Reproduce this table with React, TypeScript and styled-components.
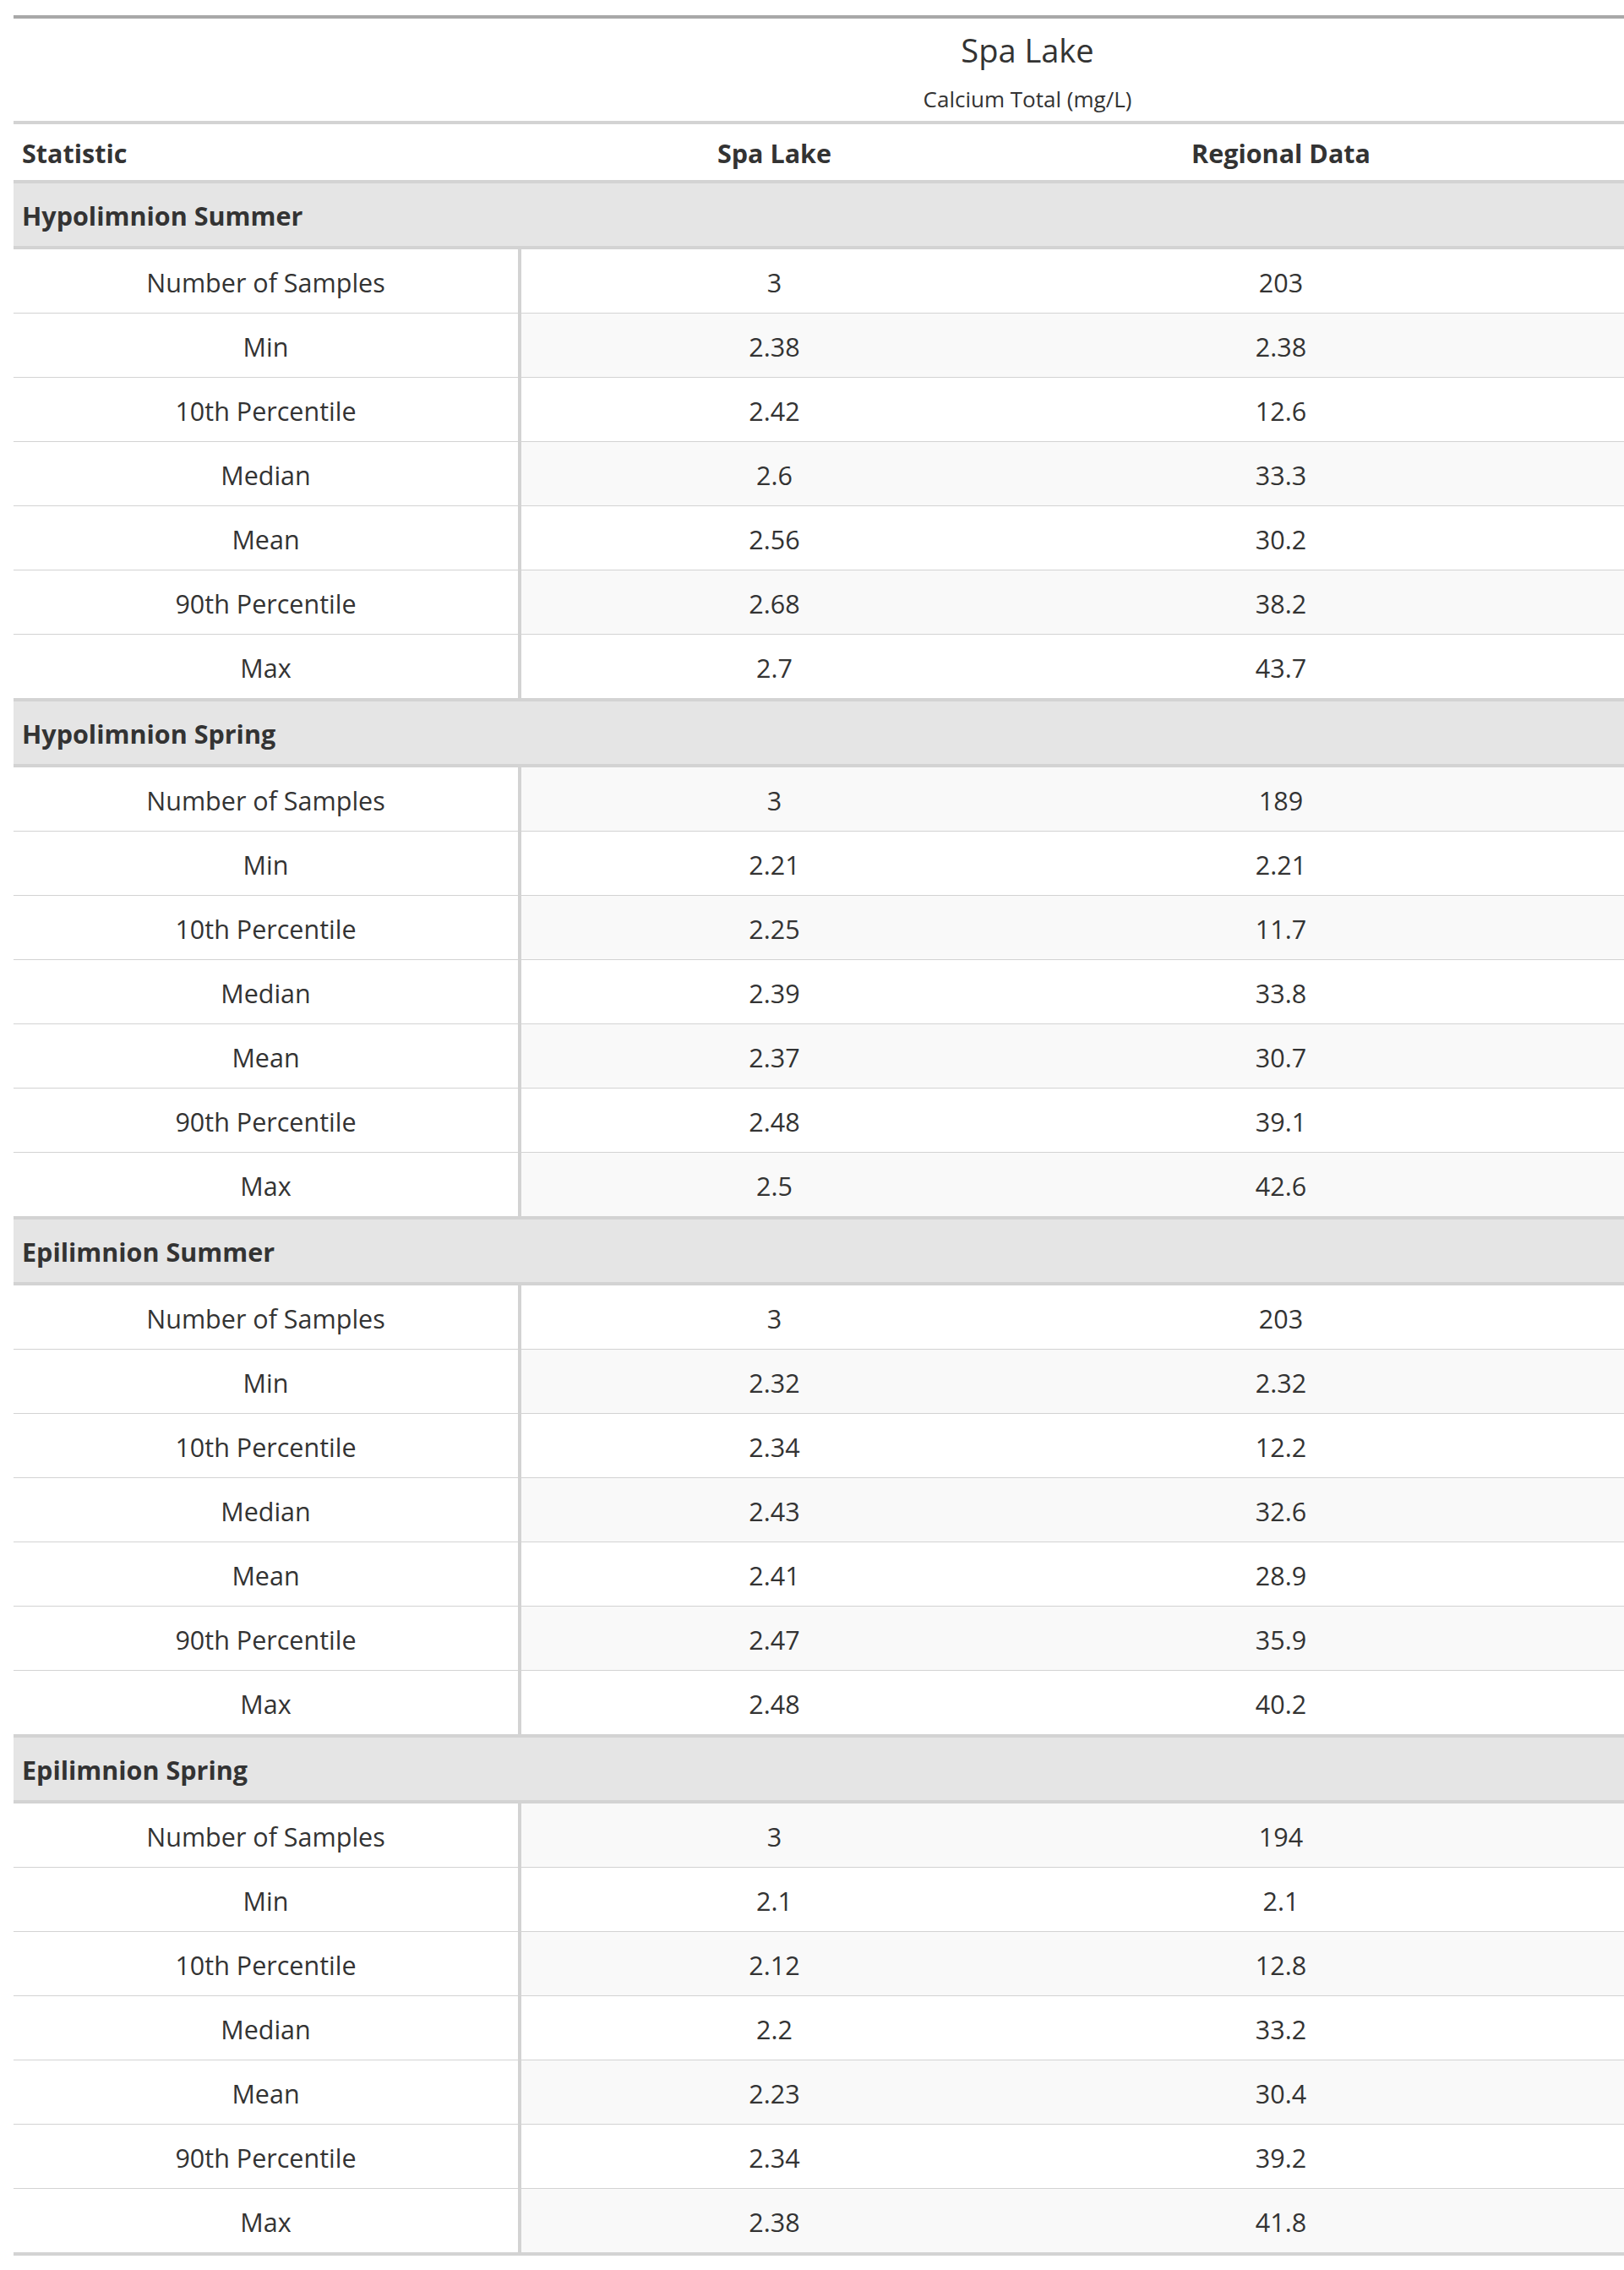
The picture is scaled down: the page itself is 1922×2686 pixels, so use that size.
import React from 'react'
import styled, { createGlobalStyle } from 'styled-components'

const GlobalStyle = createGlobalStyle`
    html, body {
        margin: 0;
        padding: 0;
        background: #ffffff;
    }
    body {
        font-family: "Open Sans", "Noto Sans", "Liberation Sans", sans-serif;
        color: #333333;
    }
`

const Page = styled.div`
    padding: 18px 0 0 16px;
`

const DataTable = styled.table`
    width: 1906px;
    table-layout: fixed;
    border-collapse: separate;
    border-spacing: 0;
    color: #333333;
    font-size: 30.5px;
`

const TitleCell = styled.th`
    border-top: 4px solid #a8a8a8;
    padding: 10px 10px 6px 504px;
    font-size: 38px;
    line-height: 54px;
    font-weight: 400;
    text-align: center;
`

const SubtitleCell = styled.th`
    padding: 7px 10px 8px 504px;
    font-size: 26px;
    line-height: 36px;
    font-weight: 400;
    text-align: center;
    border-bottom: 4px solid #d3d3d3;
`

const ColumnLabel = styled.th<{ $align?: string }>`
    padding: 12px 10px 10px;
    line-height: 44px;
    font-weight: 700;
    text-align: ${(p) => p.$align || 'center'};
    white-space: nowrap;
    overflow: hidden;
`

const GroupCell = styled.td`
    background: #e5e5e5;
    border-top: 4px solid #d3d3d3;
    border-bottom: 4px solid #d3d3d3;
    padding: 17px 10px 15px;
    line-height: 42px;
    font-weight: 700;
    text-align: left;
`

const StubCell = styled.td<{ $first: boolean }>`
    border-top: ${(p) => (p.$first ? 'none' : '1px solid #d3d3d3')};
    border-right: 4px solid #d3d3d3;
    padding: 18px 10px 14px;
    line-height: 43px;
    text-align: center;
    background: #ffffff;
`

const ValueCell = styled.td<{ $first: boolean; $striped: boolean }>`
    border-top: ${(p) => (p.$first ? 'none' : '1px solid #d3d3d3')};
    padding: 18px 10px 14px;
    line-height: 43px;
    text-align: center;
    background: ${(p) => (p.$striped ? '#f9f9f9' : '#ffffff')};
`

const BottomRule = styled.td`
    border-top: 4px solid #d3d3d3;
    padding: 0;
    height: 0;
`

const labels = [
    'Number of Samples',
    'Min',
    '10th Percentile',
    'Median',
    'Mean',
    '90th Percentile',
    'Max',
]

const groups = [
    {
        name: 'Hypolimnion Summer',
        lake: ['3', '2.38', '2.42', '2.6', '2.56', '2.68', '2.7'],
        regional: ['203', '2.38', '12.6', '33.3', '30.2', '38.2', '43.7'],
    },
    {
        name: 'Hypolimnion Spring',
        lake: ['3', '2.21', '2.25', '2.39', '2.37', '2.48', '2.5'],
        regional: ['189', '2.21', '11.7', '33.8', '30.7', '39.1', '42.6'],
    },
    {
        name: 'Epilimnion Summer',
        lake: ['3', '2.32', '2.34', '2.43', '2.41', '2.47', '2.48'],
        regional: ['203', '2.32', '12.2', '32.6', '28.9', '35.9', '40.2'],
    },
    {
        name: 'Epilimnion Spring',
        lake: ['3', '2.1', '2.12', '2.2', '2.23', '2.34', '2.38'],
        regional: ['194', '2.1', '12.8', '33.2', '30.4', '39.2', '41.8'],
    },
]

const App = () => {
    let rowIndex = 0

    return (
        <Page>
            <GlobalStyle />
            <DataTable>
                <colgroup>
                    <col style={{ width: 601 }} />
                    <col style={{ width: 599 }} />
                    <col style={{ width: 600 }} />
                    <col style={{ width: 106 }} />
                </colgroup>
                <thead>
                    <tr>
                        <TitleCell colSpan={4}>Spa Lake</TitleCell>
                    </tr>
                    <tr>
                        <SubtitleCell colSpan={4}>Calcium Total (mg/L)</SubtitleCell>
                    </tr>
                    <tr>
                        <ColumnLabel $align="left">Statistic</ColumnLabel>
                        <ColumnLabel>Spa Lake</ColumnLabel>
                        <ColumnLabel>Regional Data</ColumnLabel>
                        <ColumnLabel />
                    </tr>
                </thead>
                <tbody>
                    {groups.map((group) => (
                        <React.Fragment key={group.name}>
                            <tr>
                                <GroupCell colSpan={4}>{group.name}</GroupCell>
                            </tr>
                            {labels.map((label, i) => {
                                rowIndex += 1
                                const striped = rowIndex % 2 === 0
                                const first = i === 0
                                return (
                                    <tr key={label}>
                                        <StubCell $first={first}>{label}</StubCell>
                                        <ValueCell $first={first} $striped={striped}>{group.lake[i]}</ValueCell>
                                        <ValueCell $first={first} $striped={striped}>{group.regional[i]}</ValueCell>
                                        <ValueCell $first={first} $striped={striped} />
                                    </tr>
                                )
                            })}
                        </React.Fragment>
                    ))}
                    <tr>
                        <BottomRule colSpan={4} />
                    </tr>
                </tbody>
            </DataTable>
        </Page>
    )
}

export default App
